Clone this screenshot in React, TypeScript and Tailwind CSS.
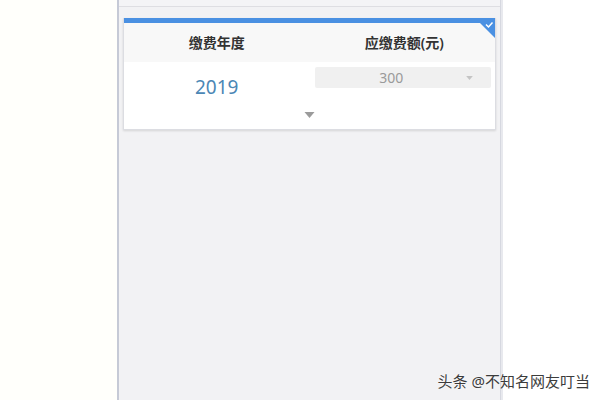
import React from "react";

function Caret({ className }: { className?: string }) {
  return (
    <svg viewBox="0 0 10 6" className={className}>
      <path d="M0 0 L10 0 L5 6 Z" fill="currentColor" />
    </svg>
  );
}

function CornerCheck() {
  return (
    <svg viewBox="0 0 20 20" className="absolute right-0 top-0 w-[20px] h-[20px]">
      <path d="M0 0 L20 0 L20 20 Z" fill="#4a90e2" />
      <path d="M11 6.5 L13.5 9 L17.5 4.5" fill="none" stroke="#fff" strokeWidth="1.5" />
    </svg>
  );
}

function PaymentCard() {
  return (
    <div className="relative mx-[4px] mt-[11px] bg-white border border-[#dcdde2] border-t-0 shadow-[0_1px_2px_rgba(0,0,0,0.12)]">
      <div className="h-[5px] bg-[#4a90e2]" />
      <CornerCheck />
      <div className="grid grid-cols-2 h-[39px] bg-[#f8f8f8] items-center text-[14px] text-[#333] font-semibold">
        <div className="text-center">缴费年度</div>
        <div className="text-center pl-[4px]">应缴费额(元)</div>
      </div>
      <div className="grid grid-cols-2 h-[44px]">
        <div className="flex items-center justify-center pt-[6px] text-[19px] text-[#4b87b5]">2019</div>
        <div className="pt-[5px] pl-[5px] pr-[4px]">
          <div className="flex items-center h-[21px] bg-[#f0f0f0] rounded-[2px] text-[14px] text-[#9a9a9a]">
            <div className="flex-1 text-center pl-[2px]">300</div>
            <Caret className="w-[7px] h-[4px] mr-[18px] text-[#c4c4c4]" />
          </div>
        </div>
      </div>
      <div className="flex justify-center h-[23px] pt-[6px]">
        <Caret className="w-[11px] h-[6px] text-[#9b9b9b]" />
      </div>
    </div>
  );
}

export default function App() {
  return (
    <div
      className="relative flex w-[600px] h-[400px] overflow-hidden bg-white"
      style={{ fontFamily: '"Noto Sans", "Noto Sans CJK SC", sans-serif' }}
    >
      <div className="w-[117px] bg-[#fffffb]" />
      <div className="w-[2px] bg-[#c6cad6]" />
      <div className="w-[381px] bg-[#f2f2f4] flex flex-col">
        <div className="h-[7px] bg-[#f4f4f6] border-b border-[#dedee2]" />
        <PaymentCard />
      </div>
      <div className="w-[1px] bg-[#d6d8e0]" />
      <div className="w-[2px] bg-[#e8e9ee]" />
      <div className="flex-1 bg-white" />
      <div className="absolute right-[10px] bottom-[8px] text-[15px] text-[#3c3c3c] [text-shadow:0_0_2px_#fff]">
        头条 @不知名网友叮当
      </div>
    </div>
  );
}
